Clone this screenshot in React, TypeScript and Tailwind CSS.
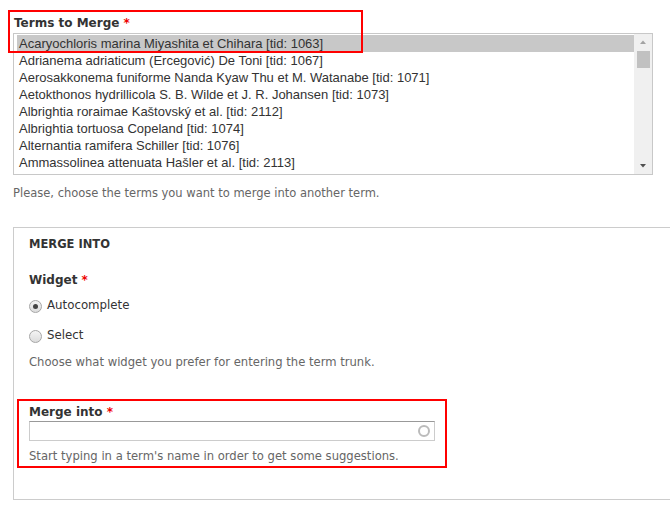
import React from "react";

const terms = [
  "Acaryochloris marina Miyashita et Chihara [tid: 1063]",
  "Adrianema adriaticum (Ercegović) De Toni [tid: 1067]",
  "Aerosakkonema funiforme Nanda Kyaw Thu et M. Watanabe [tid: 1071]",
  "Aetokthonos hydrillicola S. B. Wilde et J. R. Johansen [tid: 1073]",
  "Albrightia roraimae Kaštovský et al. [tid: 2112]",
  "Albrightia tortuosa Copeland [tid: 1074]",
  "Alternantia ramifera Schiller [tid: 1076]",
  "Ammassolinea attenuata Hašler et al. [tid: 2113]",
];

function Required() {
  return <span className="text-[#e00] font-bold"> *</span>;
}

function Radio({ checked, label }: { checked?: boolean; label: string }) {
  return (
    <label className="flex h-[20px] items-center gap-[5px] text-[11.8px] text-[#333]">
      <span className="grid h-[13px] w-[13px] place-items-center rounded-full border border-[#a6a6a6] bg-gradient-to-b from-[#f4f4f4] to-[#dcdcdc]">
        {checked && <span className="h-[5px] w-[5px] rounded-full bg-[#444]" />}
      </span>
      {label}
    </label>
  );
}

export default function App() {
  return (
    <div
      className="relative h-[513px] w-[670px] overflow-hidden bg-white pl-[13px] pt-[14px] text-[#333]"
      style={{ fontFamily: '"DejaVu Sans", Verdana, sans-serif' }}
    >
      {/* terms list */}
      <div className="pl-[1px] text-[12px] font-bold leading-[18px] text-[#333]">
        Terms to Merge
        <Required />
      </div>
      <div className="mt-[1px] flex h-[142px] w-[640px] border border-[#c8c8c8] bg-white">
        <div
          className="flex-1 pl-[3px] pt-[1px] text-[13px] leading-[17px] text-[#333]"
          style={{ fontFamily: '"Liberation Sans", Arial, sans-serif' }}
        >
          {terms.map((t, i) => (
            <div key={t} className={i === 0 ? "bg-[#c8c8c8] pl-[2px]" : "pl-[2px]"}>
              {t}
            </div>
          ))}
        </div>
        <div className="flex w-[18px] flex-col items-center bg-[#f0f0f0]">
          <svg width="10" height="14" viewBox="0 0 10 14" className="mt-[1px]">
            <path d="M2 9 L5 5.5 L8 9 Z" fill="#a3a3a3" />
          </svg>
          <div className="mt-[2px] h-[17px] w-[13px] bg-[#c1c1c1]" />
          <div className="flex-1" />
          <svg width="10" height="14" viewBox="0 0 10 14" className="mb-[1px]">
            <path d="M2 5 L5 8.5 L8 5 Z" fill="#505050" />
          </svg>
        </div>
      </div>
      <p className="mt-[10px] text-[11.5px] leading-[16px] text-[#666]">
        Please, choose the terms you want to merge into another term.
      </p>

      {/* fieldset */}
      <div className="mt-[26px] h-[273px] w-[700px] border border-[#ccc] pl-[15px] pt-[8px]">
        <div className="text-[11.5px] font-bold uppercase leading-[16px] text-[#333]">Merge into</div>
        <div className="mt-[19px] text-[12px] font-bold leading-[18px] text-[#333]">
          Widget
          <Required />
        </div>
        <div className="mt-[7px] flex flex-col gap-[10px]">
          <Radio checked label="Autocomplete" />
          <Radio label="Select" />
        </div>
        <p className="mt-[8px] text-[11.6px] leading-[16px] text-[#666]">
          Choose what widget you prefer for entering the term trunk.
        </p>
        <div className="mt-[33px] text-[12px] font-bold leading-[18px] text-[#333]">
          Merge into
          <Required />
        </div>
        <div className="relative mt-0 h-[20px] w-[406px] border border-[#ccc] border-t-[#999] bg-white">
          <span className="absolute right-[4px] top-[3px] h-[12px] w-[12px] rounded-full border-2 border-[#bbb]" />
        </div>
        <p className="mt-[7px] text-[11.6px] leading-[16px] text-[#666]">
          Start typing in a term's name in order to get some suggestions.
        </p>
      </div>

      {/* annotation boxes */}
      <div className="pointer-events-none absolute left-[8px] top-[10px] h-[43px] w-[355px] border-2 border-[#f00]" />
      <div className="pointer-events-none absolute left-[17px] top-[399px] h-[69px] w-[430px] border-2 border-[#f00]" />
    </div>
  );
}
